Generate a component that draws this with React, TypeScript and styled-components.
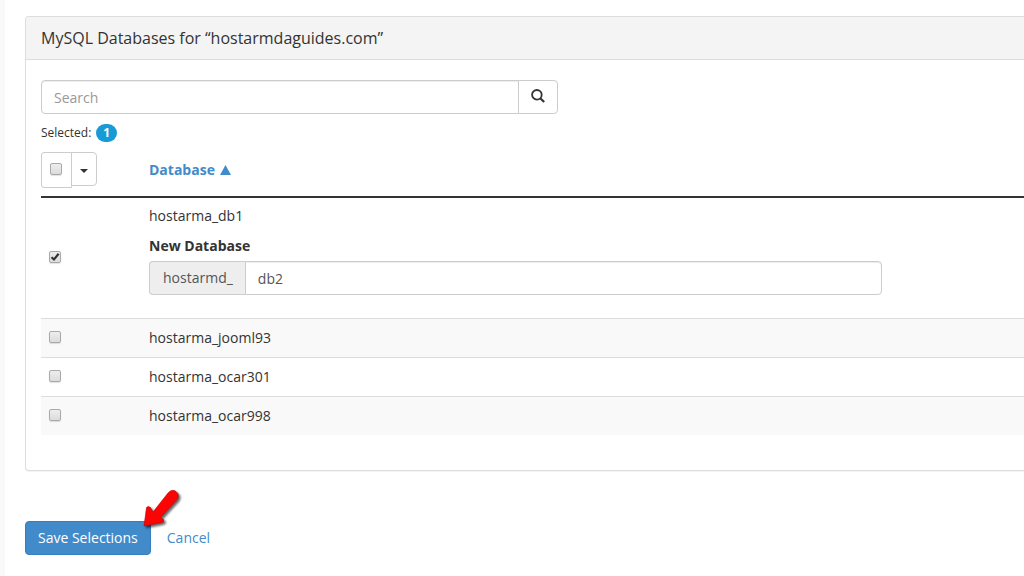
import React, { useState } from "react";
import styled, { createGlobalStyle } from "styled-components";

const GlobalStyle = createGlobalStyle`
  *, *::before, *::after { box-sizing: border-box; }
  body {
    margin: 0;
    background: #fff;
    color: #333;
    font: 14px/20px "Open Sans", sans-serif;
  }
  button, input { font: inherit; color: inherit; }
`;

const Page = styled.main`
  min-height: 100vh;
  padding: 16px 0 20px 20px;
  border-left: 5px solid #f9f9f9;
`;

const Panel = styled.section`
  border: 1px solid #ddd;
  border-right: 0;
  border-radius: 4px 0 0 4px;
  box-shadow: 0 1px 1px rgba(0, 0, 0, 0.05);
`;

const PanelTitle = styled.h1`
  margin: 0;
  padding: 10px 15px;
  border-bottom: 1px solid #ddd;
  border-top-left-radius: 3px;
  background: #f4f4f4;
  font-size: 16px;
  line-height: 22px;
  font-weight: 400;
`;

const PanelBody = styled.div`
  padding: 20px 0 35px 15px;
`;

const InputGroup = styled.div<{ $max: number }>`
  display: flex;
  max-width: ${(p) => p.$max}px;
  height: 34px;
`;

const TextInput = styled.input<{ $side: "left" | "right" }>`
  flex: 1;
  min-width: 0;
  padding: 8px 12px 6px;
  border: 1px solid #ccc;
  border-radius: ${(p) => (p.$side === "left" ? "4px 0 0 4px" : "0 4px 4px 0")};
  background: #fff;
  box-shadow: inset 0 1px 1px rgba(0, 0, 0, 0.075);
  color: #555;
  outline: 0;
  &::placeholder { color: #999; opacity: 1; }
`;

const Addon = styled.span`
  padding: 6px 12px 6px 13px;
  border: 1px solid #ccc;
  border-right: 0;
  border-radius: 4px 0 0 4px;
  background: #eee;
  color: #555;
`;

const SearchButton = styled.button`
  display: flex;
  align-items: center;
  justify-content: center;
  width: 40px;
  margin-left: -1px;
  padding: 0 0 2px;
  border: 1px solid #ccc;
  border-radius: 0 4px 4px 0;
  background: #fff;
`;

const Selected = styled.p`
  display: flex;
  align-items: center;
  gap: 5px;
  margin: 9px 0 1px;
  font-size: 12px;
`;

const Badge = styled.span`
  padding: 0 7px;
  border-radius: 9px;
  background: #179bd7;
  color: #fff;
  font-weight: 700;
  line-height: 18px;
`;

const Table = styled.table`
  width: 100%;
  border-collapse: separate;
  border-spacing: 0;
  table-layout: fixed;
`;

const HeadCell = styled.th<{ $check?: boolean }>`
  width: ${(p) => (p.$check ? "100px" : "auto")};
  padding: ${(p) => (p.$check ? "8px 0" : "8px")};
  border-bottom: 2px solid #333;
  text-align: left;
  font-weight: 700;
`;

const Row = styled.tr`
  &:nth-child(even) { background: #f9f9f9; }
  & + & > td { border-top: 1px solid #ddd; }
`;

const Cell = styled.td`
  height: 39px;
  padding: 8px;
  vertical-align: middle;
`;

const CheckCell = styled(Cell)`
  padding: 8px 8px 10px;
`;

const Checkbox = styled.input.attrs({ type: "checkbox" })`
  appearance: none;
  display: block;
  width: 12px;
  height: 12px;
  margin: 0;
  border: 1px solid #a9a9a9;
  border-radius: 2px;
  background: linear-gradient(#ededed, #dcdcdc);
  box-shadow: 0 1px 1px rgba(0, 0, 0, 0.12);
  &:checked {
    background:
      url("data:image/svg+xml,%3Csvg xmlns='http://www.w3.org/2000/svg' viewBox='0 0 10 10'%3E%3Cpath d='M1.5 5.2 4 7.5 8.6 1.8' fill='none' stroke='%23333' stroke-width='2.2'/%3E%3C/svg%3E") center / 10px 10px no-repeat,
      linear-gradient(#ededed, #dcdcdc);
  }
`;

const SelectGroup = styled.div`
  display: flex;
  align-items: flex-start;
`;

const SelectAll = styled.label`
  width: 31px;
  height: 36px;
  padding: 10px 8px;
  border: 1px solid #ccc;
  border-radius: 3px 0 0 3px;
`;

const MenuButton = styled.button`
  display: flex;
  align-items: center;
  justify-content: center;
  width: 26px;
  height: 34px;
  margin-left: -1px;
  padding: 4px 0 0;
  border: 1px solid #ccc;
  border-radius: 0 4px 4px 0;
  background: #fff;
`;

const SortLink = styled.a`
  display: inline-flex;
  align-items: center;
  gap: 5px;
  color: #428bca;
  text-decoration: none;
`;

const RenameField = styled.div`
  margin: 10px 0 15px;
`;

const FieldLabel = styled.label`
  display: block;
  margin-bottom: 5px;
  font-weight: 700;
`;

const Actions = styled.div`
  display: flex;
  gap: 4px;
  margin-top: 50px;
`;

const SaveWrap = styled.div`
  position: relative;
`;

const SaveButton = styled.button`
  height: 34px;
  padding: 6px 12px;
  border: 1px solid #357ebd;
  border-radius: 4px;
  background: #428bca;
  color: #fff;
`;

const CancelLink = styled.a`
  padding: 7px 12px;
  color: #428bca;
  text-decoration: none;
`;

const Pointer = styled.svg`
  position: absolute;
  right: -33px;
  bottom: 20px;
  filter: drop-shadow(2px 2px 1px rgba(0, 0, 0, 0.6));
  pointer-events: none;
`;

const names = ["hostarma_db1", "hostarma_jooml93", "hostarma_ocar301", "hostarma_ocar998"];

export default function App() {
  const [picked, setPicked] = useState<string[]>([names[0]]);
  const [newName, setNewName] = useState("db2");
  const toggle = (name: string) =>
    setPicked((now) => (now.includes(name) ? now.filter((n) => n !== name) : [...now, name]));

  return (
    <>
      <GlobalStyle />
      <Page>
        <Panel>
          <PanelTitle>MySQL Databases for “hostarmdaguides.com”</PanelTitle>
          <PanelBody>
            <InputGroup $max={517}>
              <TextInput $side="left" type="text" placeholder="Search" aria-label="Search" />
              <SearchButton type="button" aria-label="Search databases">
                <svg width="14" height="14" viewBox="0 0 14 14" fill="none" stroke="#333">
                  <circle cx="5.9" cy="5.8" r="4.8" strokeWidth="1.8" />
                  <path d="M9.2 9.2 13.2 13" strokeWidth="2.2" />
                </svg>
              </SearchButton>
            </InputGroup>
            <Selected>
              Selected: <Badge>{picked.length}</Badge>
            </Selected>
            <Table>
              <thead>
                <tr>
                  <HeadCell $check>
                    <SelectGroup>
                      <SelectAll>
                        <Checkbox
                          aria-label="Select all"
                          checked={picked.length === names.length}
                          onChange={(e) => setPicked(e.target.checked ? names : [])}
                        />
                      </SelectAll>
                      <MenuButton type="button" aria-label="Selection options">
                        <svg width="8" height="4" viewBox="0 0 8 4">
                          <path d="M0 0h8L4 4z" fill="#333" />
                        </svg>
                      </MenuButton>
                    </SelectGroup>
                  </HeadCell>
                  <HeadCell>
                    <SortLink href="#database">
                      Database
                      <svg width="11" height="10" viewBox="0 0 11 10">
                        <path d="M5.5 0 11 10H0z" fill="#428bca" />
                      </svg>
                    </SortLink>
                  </HeadCell>
                </tr>
              </thead>
              <tbody>
                {names.map((name) => (
                  <Row key={name}>
                    <CheckCell>
                      <Checkbox
                        aria-label={name}
                        checked={picked.includes(name)}
                        onChange={() => toggle(name)}
                      />
                    </CheckCell>
                    <Cell>
                      {name}
                      {picked.includes(name) && (
                        <RenameField>
                          <FieldLabel htmlFor={`new-${name}`}>New Database</FieldLabel>
                          <InputGroup $max={733}>
                            <Addon>hostarmd_</Addon>
                            <TextInput
                              $side="right"
                              id={`new-${name}`}
                              type="text"
                              value={newName}
                              onChange={(e) => setNewName(e.target.value)}
                            />
                          </InputGroup>
                        </RenameField>
                      )}
                    </Cell>
                  </Row>
                ))}
              </tbody>
            </Table>
          </PanelBody>
        </Panel>
        <Actions>
          <SaveWrap>
            <SaveButton type="button">Save Selections</SaveButton>
            <Pointer width="42" height="46" viewBox="0 0 42 46">
              <path
                d="M2 37 4.500 18.500Q6 16.500 8.500 18.500L11 23 26 4Q30-.5 34 2.500T35 10.500L18.500 28.500 21.500 30.500Q22.500 32.500 20 33.500Z"
                fill="#fb0404"
                stroke="#c40000"
                strokeWidth="0.6"
              />
            </Pointer>
          </SaveWrap>
          <CancelLink href="#cancel">Cancel</CancelLink>
        </Actions>
      </Page>
    </>
  );
}
